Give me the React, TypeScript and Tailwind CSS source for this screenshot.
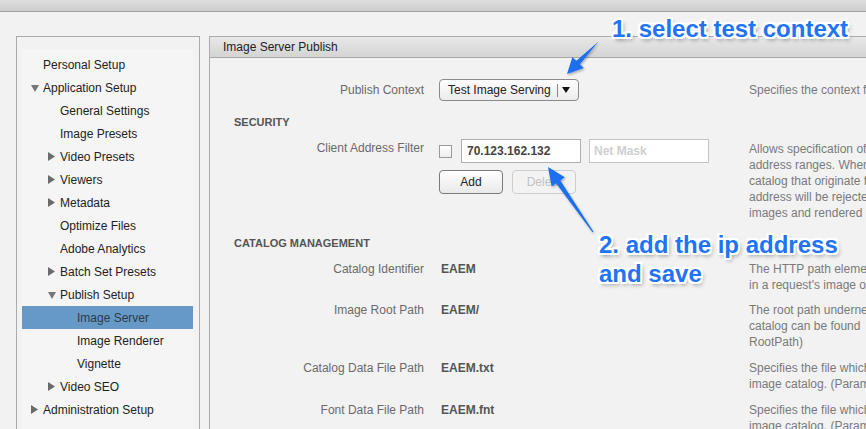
import React from "react";

type NavItem = {
  label: string;
  level: number;
  arrow?: "right" | "down";
  active?: boolean;
};

const navItems: NavItem[] = [
  { label: "Personal Setup", level: 0 },
  { label: "Application Setup", level: 0, arrow: "down" },
  { label: "General Settings", level: 1 },
  { label: "Image Presets", level: 1 },
  { label: "Video Presets", level: 1, arrow: "right" },
  { label: "Viewers", level: 1, arrow: "right" },
  { label: "Metadata", level: 1, arrow: "right" },
  { label: "Optimize Files", level: 1 },
  { label: "Adobe Analytics", level: 1 },
  { label: "Batch Set Presets", level: 1, arrow: "right" },
  { label: "Publish Setup", level: 1, arrow: "down" },
  { label: "Image Server", level: 2, active: true },
  { label: "Image Renderer", level: 2 },
  { label: "Vignette", level: 2 },
  { label: "Video SEO", level: 1, arrow: "right" },
  { label: "Administration Setup", level: 0, arrow: "right" },
];

const indent = ["pl-[9px]", "pl-[26px]", "pl-[43px]"];

function Caret({ dir }: { dir?: "right" | "down" }) {
  return (
    <span className="flex h-[12px] w-[12px] shrink-0 items-center">
      {dir === "right" && (
        <svg width="8" height="9" viewBox="0 0 8 9">
          <path d="M0 0 L7 4.5 L0 9 Z" fill="#6b6b6b" />
        </svg>
      )}
      {dir === "down" && (
        <svg width="8" height="8" viewBox="0 0 8 8">
          <path d="M0 1 L8 1 L4 8 Z" fill="#777" />
        </svg>
      )}
    </span>
  );
}

function Desc({ lines }: { lines: string[] }) {
  return (
    <div className="whitespace-nowrap text-[12px] leading-[16px] text-[#7a7a7a]">
      {lines.map((l, i) => (
        <div key={i}>{l}</div>
      ))}
    </div>
  );
}

function Label({ children }: { children: React.ReactNode }) {
  return (
    <div className="pr-[15px] text-right text-[12px] leading-[16px] text-[#6a6a6a]">
      {children}
    </div>
  );
}

const note =
  "absolute whitespace-nowrap text-[24px] font-bold leading-[28px] text-[#1f74f5] [text-shadow:-2px_-2px_0_#fff,2px_-2px_0_#fff,-2px_2px_0_#fff,2px_2px_0_#fff,0_-2px_0_#fff,0_2px_0_#fff,-2px_0_0_#fff,2px_0_0_#fff,2px_3px_4px_rgba(0,0,0,0.45)]";

export default function App() {
  return (
    <div className="relative h-[429px] w-[866px] overflow-hidden bg-[#f2f2f2] font-['Liberation_Sans',Arial,sans-serif]">
      <div className="h-[12px] border-b border-[#a0a0a0] bg-gradient-to-b from-[#dedede] to-[#cecece]" />

      <div className="flex gap-[9px] pl-[16px] pt-[24px]">
        {/* left navigation */}
        <div className="h-[420px] w-[184px] shrink-0 border border-b-0 border-[#ababab]">
          <div className="ml-[5px] mr-[6px] mt-[12px] h-[400px] bg-[#f5f5f5] pt-[4px]">
            {navItems.map((item) => (
              <div
                key={item.label}
                className={`flex h-[23px] items-center text-[12px] ${indent[item.level]} ${
                  item.active ? "bg-[#6699c6] text-[#2e3b47]" : "text-[#222]"
                }`}
              >
                <Caret dir={item.arrow} />
                <span>{item.label}</span>
              </div>
            ))}
          </div>
        </div>

        {/* right content */}
        <div className="h-[420px] w-[860px] shrink-0 border-l border-t border-[#ababab]">
          <div className="flex h-[21px] items-center border-b border-[#a8a8a8] bg-gradient-to-b from-[#e8e8e8] to-[#d4d4d4] pl-[13px] text-[12px] text-[#222]">
            Image Server Publish
          </div>

          <div className="grid mt-[21px] h-[22px] grid-cols-[229px_310px_300px] items-center">
            <Label>Publish Context</Label>
            <div>
              <div className="flex h-[22px] w-[140px] items-center rounded-[4px] border border-[#8a8a8a] bg-gradient-to-b from-[#fdfdfd] to-[#ececec] text-[12px] text-[#222]">
                <span className="w-[117px] pl-[8px]">Test Image Serving</span>
                <span className="h-[13px] border-l border-[#888]" />
                <svg className="ml-[4px]" width="8" height="6" viewBox="0 0 8 6">
                  <path d="M0 0 L8 0 L4 6 Z" fill="#111" />
                </svg>
              </div>
            </div>
            <Desc lines={["Specifies the context for publishing."]} />
          </div>

          <div className="mt-[14px] pl-[24px] text-[11px] font-bold leading-[14px] text-[#555]">
            SECURITY
          </div>

          <div className="mt-[10px] grid grid-cols-[229px_310px_300px] items-start">
            <div className="pt-[1px]">
              <Label>Client Address Filter</Label>
            </div>
            <div>
              <div className="flex h-[24px] items-center">
                <span className="h-[13px] w-[13px] border border-[#9a9a9a] bg-gradient-to-b from-white to-[#ededed]" />
                <div className="ml-[9px] flex h-[24px] w-[120px] items-center border border-[#b0b0b0] bg-white pl-[5px] text-[12px] font-bold text-[#444]">
                  70.123.162.132
                </div>
                <div className="ml-[8px] flex h-[24px] w-[120px] items-center border border-[#c4c4c4] bg-white pl-[4px] text-[12px] font-bold text-[#cfcfcf]">
                  Net Mask
                </div>
              </div>
              <div className="mt-[7px] flex gap-[9px]">
                <button className="h-[24px] w-[64px] rounded-[4px] border border-[#7a7a7a] bg-gradient-to-b from-white to-[#e9e9e9] text-[12px] text-[#222]">
                  Add
                </button>
                <button className="h-[24px] w-[64px] rounded-[4px] border border-[#cdcdcd] bg-[#f3f3f3] text-[12px] text-[#c2c2c2]">
                  Delete
                </button>
              </div>
            </div>
            <div className="pt-[2px]">
              <Desc
                lines={[
                  "Allows specification of IP",
                  "address ranges. When defined,",
                  "catalog that originate from",
                  "address will be rejected.",
                  "images and rendered",
                ]}
              />
            </div>
          </div>

          <div className="mt-[15px] pl-[24px] text-[11px] font-bold leading-[14px] text-[#555]">
            CATALOG MANAGEMENT
          </div>

          {[
            { label: "Catalog Identifier", value: "EAEM", mt: "mt-[11px]", desc: ["The HTTP path element", "in a request's image object"] },
            { label: "Image Root Path", value: "EAEM/", mt: "mt-[9px]", desc: ["The root path underneath", "catalog can be found", "RootPath)"] },
            { label: "Catalog Data File Path", value: "EAEM.txt", mt: "mt-[10px]", desc: ["Specifies the file which", "image catalog. (Param"] },
            { label: "Font Data File Path", value: "EAEM.fnt", mt: "mt-[10px]", desc: ["Specifies the file which", "image catalog. (Param"] },
          ].map((row) => (
            <div key={row.label} className={`grid grid-cols-[229px_310px_300px] items-start ${row.mt}`}>
              <Label>{row.label}</Label>
              <div className="pl-[2px] text-[12px] font-bold leading-[16px] text-[#555]">{row.value}</div>
              <Desc lines={row.desc} />
            </div>
          ))}
        </div>
      </div>

      {/* annotations */}
      <svg className="pointer-events-none absolute left-0 top-0" width="866" height="429">
        <defs>
          <filter id="sh" x="-20%" y="-20%" width="140%" height="140%">
            <feDropShadow dx="1" dy="1.5" stdDeviation="1" floodColor="#000" floodOpacity="0.3" />
          </filter>
        </defs>
        <g fill="#1f6ff0" filter="url(#sh)">
          <path d="M599.4 40.6 L598.6 41.4 L576.3 60.8 L572.4 56.9 L567 74 L583.8 68.1 L579.9 64.2 Z" />
          <path d="M593.5 231.7 L592.5 232.3 L556.1 183.2 L551.6 186.4 L548 167 L564.8 177.2 L560.3 180.4 Z" />
        </g>
      </svg>
      <div className={`${note} left-[612px] top-[15px]`}>1. select test context</div>
      <div className={`${note} left-[599px] top-[230px] leading-[29px]`}>
        2. add the ip address
        <br />
        and save
      </div>
    </div>
  );
}
